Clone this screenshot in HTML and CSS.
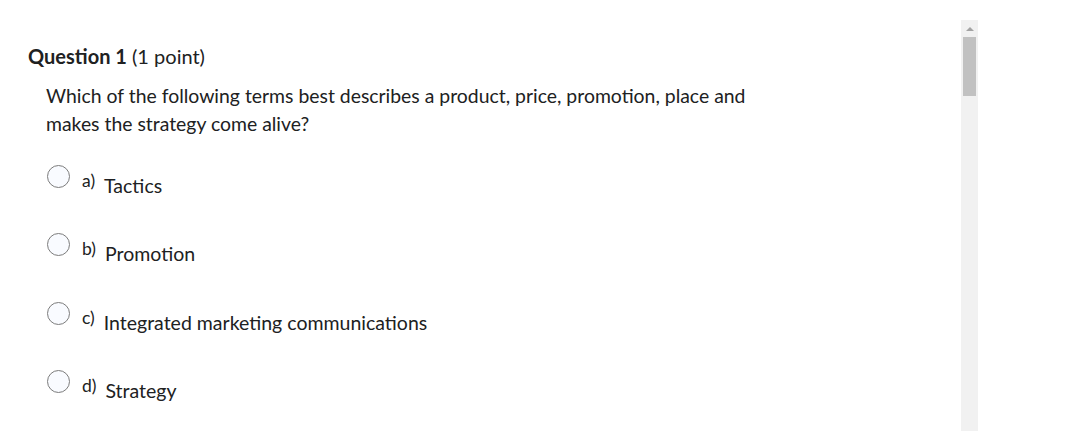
FILE: index.html
```html
<!DOCTYPE html>
<html>
<head>
<meta charset="utf-8">
<link rel="stylesheet" href="styles.css">
</head>
<body>
<div class="page">
  <main class="content">
    <h2 class="q-title"><strong>Question 1</strong> <span class="pts">(1 point)</span></h2>
    <div class="q-body">
      <p class="q-text">Which of the following terms best describes a product, price, promotion, place and makes the strategy come alive?</p>
      <div class="options">
        <label class="opt"><span class="radio"></span><span class="letter">a)</span><span class="ans">Tactics</span></label>
        <label class="opt"><span class="radio"></span><span class="letter">b)</span><span class="ans">Promotion</span></label>
        <label class="opt"><span class="radio"></span><span class="letter">c)</span><span class="ans">Integrated marketing communications</span></label>
        <label class="opt"><span class="radio"></span><span class="letter">d)</span><span class="ans">Strategy</span></label>
      </div>
    </div>
  </main>
  <div class="scrollbar">
    <div class="arrow"></div>
    <div class="thumb"></div>
  </div>
</div>
</body>
</html>
```
FILE: styles.css
```css
html, body {
  margin: 0;
  padding: 0;
  background: #ffffff;
}
body {
  font-family: Lato, "Noto Sans", sans-serif;
  color: #202122;
  width: 1076px;
  height: 431px;
  overflow: hidden;
}
.page {
  display: flex;
  height: 431px;
}
.content {
  width: 961px;
  padding: 44px 0 0 28px;
  box-sizing: border-box;
}
.q-title {
  margin: 0;
  font-size: 20px;
  line-height: 24px;
  font-weight: 400;
  color: #202122;
}
.q-title strong {
  font-weight: 700;
}
.q-body {
  padding-left: 18px;
  padding-top: 14px;
}
.q-text {
  margin: 0;
  font-size: 19.4px;
  line-height: 28px;
  width: 720px;
  color: #202122;
}
.options {
  display: flex;
  flex-direction: column;
  gap: 44.33px;
  padding-top: 26px;
}
.opt {
  display: flex;
  align-items: flex-start;
  height: 24px;
}
.radio {
  width: 23px;
  height: 23px;
  border: 1px solid #7c7c7c;
  border-radius: 50%;
  background: #f9fbff;
  box-sizing: border-box;
  margin-left: 1px;
  margin-top: 1px;
  flex: none;
}
.letter {
  font-size: 17.5px;
  line-height: 20px;
  margin-left: 12px;
  margin-top: 7px;
  color: #202122;
  flex: none;
}
.ans {
  font-size: 19.5px;
  line-height: 20px;
  margin-left: 9px;
  margin-top: 12px;
  color: #202122;
  white-space: nowrap;
}
.scrollbar {
  width: 17px;
  margin-top: 20px;
  background: #f1f1f1;
  display: flex;
  flex-direction: column;
  align-items: center;
}
.arrow {
  margin-top: 7px;
  width: 0;
  height: 0;
  border-left: 4px solid transparent;
  border-right: 4px solid transparent;
  border-bottom: 4px solid #a3a3a3;
}
.thumb {
  margin-top: 6px;
  width: 13px;
  height: 59px;
  background: #c1c1c1;
}
```
